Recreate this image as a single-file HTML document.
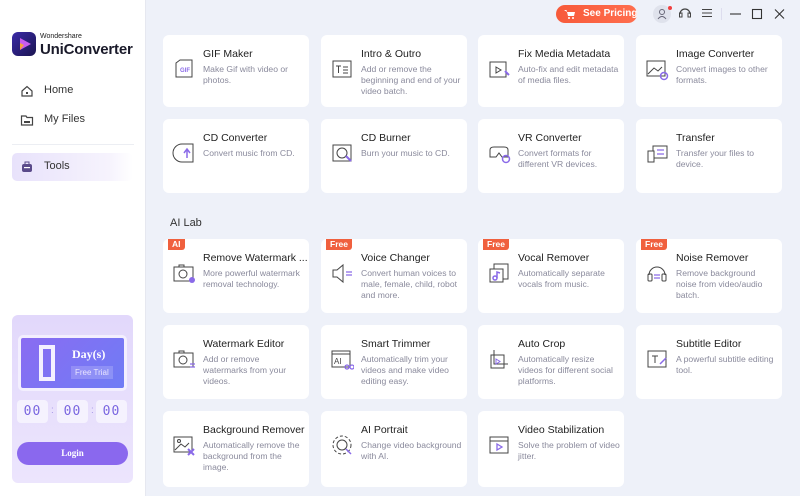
<!DOCTYPE html>
<html><head><meta charset="utf-8"><style>
*{margin:0;padding:0;box-sizing:border-box}
body{width:800px;height:496px;overflow:hidden;font-family:"Liberation Sans",sans-serif;background:#eef1f9;position:relative}
.side{position:absolute;left:0;top:0;width:146px;height:496px;background:#fff;border-right:1px solid #e6e8f0}
.logo{position:absolute;left:12px;top:32px;width:24px;height:24px;border-radius:6px;background:linear-gradient(135deg,#3a2aa8,#1b1550)}
.brand1{position:absolute;left:40px;top:33px;font-size:7px;color:#222}
.brand2{position:absolute;left:40px;top:41px;font-size:15px;font-weight:bold;color:#1a1a2a;letter-spacing:-0.2px}
.nav{position:absolute;left:20px;font-size:11px;color:#333}
.nav span{position:absolute;left:24px;top:0;white-space:nowrap}
.tools{position:absolute;left:12px;top:153px;width:121px;height:28px;border-radius:5px;background:linear-gradient(90deg,#e8e2fb,#f6f3fd 80%,#fff)}
.promo{position:absolute;left:12px;top:315px;width:121px;height:168px;border-radius:6px;background:linear-gradient(180deg,#e2d8fb,#ece5fd)}
.pin{position:absolute;left:6px;top:20px;width:109px;height:56px;border:3px solid #f3effe;border-radius:5px;background:linear-gradient(135deg,#8a6cf2,#6f7cf5)}
.tbox{position:absolute;top:85px;width:31px;height:23px;background:#f5f2fe;border-radius:4px;color:#7a66e0;font-family:"DejaVu Sans Mono",monospace;font-size:13px;text-align:center;line-height:23px;letter-spacing:1px}
.login{position:absolute;left:5px;top:127px;width:111px;height:23px;border-radius:12px;background:#8a68ee;color:#fff;font-family:"Liberation Serif",serif;font-weight:bold;font-size:9px;text-align:center;line-height:23px}
.card{position:absolute;width:146px;background:#fff;border-radius:6px}
.card .ic{position:absolute;left:9px;top:22px;width:24px;height:24px}
.card .t{position:absolute;left:40px;top:13px;font-size:10.5px;color:#222;white-space:nowrap}
.card .d{position:absolute;left:40px;top:29px;width:102px;font-size:8.6px;line-height:11px;color:#8a8a9c}
.bd{position:absolute;left:5px;top:0;height:11px;background:#f0603e;color:#fff;font-size:8.5px;font-weight:bold;line-height:11px;padding:0 4px;border-radius:0 0 3px 0}
.lab{position:absolute;left:170px;top:217px;font-size:11px;color:#333}
</style></head><body>
<div class="side">
 <div class="logo"><svg width="24" height="24"><path d="M8 6 L19 12 L8 18Z" fill="#c85cf0"/><path d="M8 11 L12 13 L8 18Z" fill="#f6a040"/></svg></div>
 <div class="brand1">Wondershare</div>
 <div class="brand2">UniConverter</div>
 <div class="nav" style="top:84px"><svg width="14" height="14"><path d="M2 7 L7 2.5 L12 7 V12 H2Z" fill="none" stroke="#444" stroke-width="1.2"/><rect x="6" y="8" width="2" height="2" fill="#444"/></svg><span>Home</span></div>
 <div class="nav" style="top:113px"><svg width="14" height="14"><path d="M1.5 3 H6 L7 4.5 H12.5 V12 H1.5Z" fill="none" stroke="#444" stroke-width="1.2"/><rect x="4" y="8" width="6" height="2" fill="#444"/></svg><span>My Files</span></div>
 <div style="position:absolute;left:12px;top:144px;width:122px;height:1px;background:#eceef3"></div>
 <div class="tools"></div>
 <div class="nav" style="top:160px"><svg width="14" height="14"><rect x="2" y="4" width="10" height="8" rx="2" fill="#5a4a8a"/><rect x="5" y="2" width="4" height="3" fill="none" stroke="#5a4a8a"/><rect x="4" y="7" width="6" height="1.2" fill="#fff"/></svg><span>Tools</span></div>
 <div class="promo">
  <div class="pin">
   <svg style="position:absolute;left:15px;top:5px" width="22" height="40"><path d="M3 2 H19 V38 H3Z M7 6 V34 H15 V6Z" fill="#f4f0ff" fill-rule="evenodd"/></svg>
   <div style="position:absolute;left:51px;top:9px;color:#fff;font-family:'Liberation Serif',serif;font-weight:bold;font-size:12px">Day(s)</div>
   <div style="position:absolute;left:50px;top:28px;background:rgba(255,255,255,.18);color:#eae6ff;font-size:8px;padding:2px 4px;white-space:nowrap">Free Trial</div>
  </div>
  <div class="tbox" style="left:5px">00</div>
  <div style="position:absolute;left:39px;top:90px;color:#a89ae8;font-size:10px">:</div>
  <div class="tbox" style="left:45px">00</div>
  <div style="position:absolute;left:79px;top:90px;color:#a89ae8;font-size:10px">:</div>
  <div class="tbox" style="left:84px">00</div>
  <div class="login">Login</div>
 </div>
</div>

<div style="position:absolute;left:556px;top:5px;width:81px;height:18px;border-radius:9px;background:linear-gradient(90deg,#f75a3a,#ff6e4e);white-space:nowrap">
 <svg style="position:absolute;left:8px;top:4px" width="12" height="10"><path d="M0 1 H2.5 L4 7 H10 L11 3 H3" fill="#fff"/><circle cx="5" cy="9" r="1" fill="#fff"/><circle cx="9" cy="9" r="1" fill="#fff"/></svg>
 <span style="position:absolute;left:27px;top:0;height:18px;line-height:18px;color:#fff;font-size:10px;font-weight:bold">See Pricing</span></div>
<div style="position:absolute;left:653px;top:5px;width:18px;height:18px;border-radius:9px;background:#dfe2ec"></div>
<svg style="position:absolute;left:656px;top:7px" width="14" height="14"><circle cx="6" cy="5" r="2.5" fill="none" stroke="#667" /><path d="M2 12 Q6 7 10 12" fill="none" stroke="#667"/></svg>
<div style="position:absolute;left:668px;top:6px;width:4px;height:4px;border-radius:2px;background:#f04040"></div>
<svg style="position:absolute;left:678px;top:6px" width="14" height="14"><path d="M2 8 A5 5 0 0 1 12 8" fill="none" stroke="#444" stroke-width="1.2"/><rect x="1.5" y="7" width="2.5" height="4" fill="none" stroke="#444"/><rect x="10" y="7" width="2.5" height="4" fill="none" stroke="#444"/></svg>
<svg style="position:absolute;left:701px;top:8px" width="12" height="10"><path d="M1 1.5H11M1 5H11M1 8.5H11" stroke="#444" stroke-width="1.1"/></svg>
<div style="position:absolute;left:721px;top:8px;width:1px;height:12px;background:#dde"></div>
<svg style="position:absolute;left:729px;top:8px" width="60" height="12"><path d="M1 6H12" stroke="#333" stroke-width="1.1"/><rect x="23.5" y="1.5" width="9" height="9" fill="none" stroke="#333" stroke-width="1.1"/><path d="M46 1.5L55 10.5M55 1.5L46 10.5" stroke="#333" stroke-width="1.1"/></svg>

<div class="card" style="left:163px;top:35px;height:72px"><svg class="ic" viewBox="0 0 24 24"><path d="M4 6 L8 3 H20 V20 H4Z" fill="none" stroke="#444"/><text x="8" y="15" font-size="6" fill="#8a6ae8" font-weight="bold" font-family="Liberation Sans">GIF</text></svg><div class="t">GIF Maker</div><div class="d">Make Gif with video or photos.</div></div>
<div class="card" style="left:321px;top:35px;height:72px"><svg class="ic" viewBox="0 0 24 24"><rect x="3" y="4" width="18" height="16" fill="none" stroke="#444"/><path d="M6 9H11M8.5 9V16M13 10H18M13 13H18M13 16H18" stroke="#444"/></svg><div class="t">Intro &amp; Outro</div><div class="d">Add or remove the beginning and end of your video batch.</div></div>
<div class="card" style="left:478px;top:35px;height:72px"><svg class="ic" viewBox="0 0 24 24"><rect x="3" y="5" width="16" height="15" fill="none" stroke="#444"/><path d="M9 10L14 13L9 16Z" fill="none" stroke="#444"/><path d="M18 14L22 18" stroke="#8a6ae8" stroke-width="2"/></svg><div class="t">Fix Media Metadata</div><div class="d">Auto-fix and edit metadata of media files.</div></div>
<div class="card" style="left:636px;top:35px;height:72px"><svg class="ic" viewBox="0 0 24 24"><rect x="2" y="4" width="18" height="15" fill="none" stroke="#444"/><path d="M3 17L9 11L13 14L17 10" fill="none" stroke="#444"/><circle cx="19" cy="19" r="3.5" fill="none" stroke="#8a6ae8" stroke-width="1.5"/></svg><div class="t">Image Converter</div><div class="d">Convert images to other formats.</div></div>
<div class="card" style="left:163px;top:119px;height:74px"><svg class="ic" viewBox="0 0 24 24"><path d="M10 3 A9 9 0 0 0 10 21 H21 V3Z" fill="none" stroke="#444"/><path d="M15 17V9M12 12L15 8L18 12" fill="none" stroke="#8a6ae8" stroke-width="1.5"/></svg><div class="t">CD Converter</div><div class="d">Convert music from CD.</div></div>
<div class="card" style="left:321px;top:119px;height:74px"><svg class="ic" viewBox="0 0 24 24"><rect x="3" y="4" width="18" height="16" fill="none" stroke="#444"/><circle cx="12" cy="12" r="5" fill="none" stroke="#444"/><path d="M16 15L21 20" stroke="#8a6ae8" stroke-width="2"/></svg><div class="t">CD Burner</div><div class="d">Burn your music to CD.</div></div>
<div class="card" style="left:478px;top:119px;height:74px"><svg class="ic" viewBox="0 0 24 24"><path d="M3 9 Q3 6 7 6 H17 Q21 6 21 9 V16 H15 L12 12 L9 16 H3Z" fill="none" stroke="#444"/><circle cx="19" cy="18" r="3.5" fill="none" stroke="#8a6ae8" stroke-width="1.5"/></svg><div class="t">VR Converter</div><div class="d">Convert formats for different VR devices.</div></div>
<div class="card" style="left:636px;top:119px;height:74px"><svg class="ic" viewBox="0 0 24 24"><rect x="8" y="5" width="14" height="12" fill="none" stroke="#444"/><rect x="3" y="10" width="6" height="11" fill="#fff" stroke="#444"/><path d="M12 9H19M12 13H19" stroke="#8a6ae8" stroke-width="1.3"/></svg><div class="t">Transfer</div><div class="d">Transfer your files to device.</div></div>

<div class="lab">AI Lab</div>
<div class="card" style="left:163px;top:239px;height:74px"><div class="bd">AI</div><svg class="ic" viewBox="0 0 24 24"><rect x="2" y="6" width="19" height="14" fill="none" stroke="#444"/><path d="M7 6V4H12V6" fill="none" stroke="#444"/><circle cx="11" cy="13" r="4" fill="none" stroke="#444"/><circle cx="20" cy="19" r="3" fill="#8a6ae8"/></svg><div class="t">Remove Watermark ...</div><div class="d">More powerful watermark removal technology.</div></div>
<div class="card" style="left:321px;top:239px;height:74px"><div class="bd">Free</div><svg class="ic" viewBox="0 0 24 24"><path d="M3 9H7L13 4V21L7 16H3Z" fill="none" stroke="#444"/><path d="M16 11H22M16 14H22" stroke="#8a6ae8" stroke-width="1.3"/></svg><div class="t">Voice Changer</div><div class="d">Convert human voices to male, female, child, robot and more.</div></div>
<div class="card" style="left:478px;top:239px;height:74px"><div class="bd">Free</div><svg class="ic" viewBox="0 0 24 24"><rect x="7" y="3" width="14" height="15" fill="none" stroke="#444"/><rect x="3" y="8" width="13" height="13" fill="#fff" stroke="#444"/><circle cx="8" cy="17" r="2" fill="none" stroke="#8a6ae8" stroke-width="1.5"/><path d="M10 17V11L13 12" fill="none" stroke="#8a6ae8" stroke-width="1.5"/></svg><div class="t">Vocal Remover</div><div class="d">Automatically separate vocals from music.</div></div>
<div class="card" style="left:636px;top:239px;height:74px"><div class="bd">Free</div><svg class="ic" viewBox="0 0 24 24"><path d="M4 14 A8 8 0 0 1 20 14" fill="none" stroke="#444"/><rect x="3" y="13" width="4" height="7" rx="1" fill="none" stroke="#444"/><rect x="17" y="13" width="4" height="7" rx="1" fill="none" stroke="#444"/><path d="M9 14H15M9 17H15" stroke="#8a6ae8" stroke-width="1.3"/></svg><div class="t">Noise Remover</div><div class="d">Remove background noise from video/audio batch.</div></div>
<div class="card" style="left:163px;top:325px;height:74px"><svg class="ic" viewBox="0 0 24 24"><rect x="2" y="6" width="19" height="14" fill="none" stroke="#444"/><path d="M7 6V4H12V6" fill="none" stroke="#444"/><circle cx="11" cy="13" r="4" fill="none" stroke="#444"/><path d="M18 17H23M18 20H23" stroke="#8a6ae8" stroke-width="1.3"/></svg><div class="t">Watermark Editor</div><div class="d">Add or remove watermarks from your videos.</div></div>
<div class="card" style="left:321px;top:325px;height:74px"><svg class="ic" viewBox="0 0 24 24"><rect x="2" y="4" width="18" height="16" fill="none" stroke="#444"/><path d="M2 7H20" stroke="#444"/><text x="4" y="17" font-size="8" fill="#444" font-family="Liberation Sans">AI</text><circle cx="17" cy="20" r="2" fill="none" stroke="#8a6ae8" stroke-width="1.3"/><circle cx="22" cy="20" r="2" fill="none" stroke="#8a6ae8" stroke-width="1.3"/></svg><div class="t">Smart Trimmer</div><div class="d">Automatically trim your videos and make video editing easy.</div></div>
<div class="card" style="left:478px;top:325px;height:74px"><svg class="ic" viewBox="0 0 24 24"><path d="M7 3V17H21" fill="none" stroke="#444"/><rect x="4" y="8" width="13" height="13" fill="none" stroke="#444"/><path d="M9 12L13 14.5L9 17Z" fill="none" stroke="#8a6ae8"/></svg><div class="t">Auto Crop</div><div class="d">Automatically resize videos for different social platforms.</div></div>
<div class="card" style="left:636px;top:325px;height:74px"><svg class="ic" viewBox="0 0 24 24"><rect x="3" y="4" width="18" height="16" fill="none" stroke="#444"/><path d="M7 9H13M10 9V16" stroke="#444"/><path d="M15 17L21 11" stroke="#8a6ae8" stroke-width="1.5"/></svg><div class="t">Subtitle Editor</div><div class="d">A powerful subtitle editing tool.</div></div>
<div class="card" style="left:163px;top:411px;height:76px"><svg class="ic" viewBox="0 0 24 24"><rect x="2" y="4" width="18" height="15" fill="none" stroke="#444"/><path d="M3 17L9 11L13 14L17 10" fill="none" stroke="#444"/><circle cx="7" cy="8" r="1.5" fill="none" stroke="#444"/><path d="M16 16L22 22M22 16L16 22" stroke="#8a6ae8" stroke-width="2"/></svg><div class="t">Background Remover</div><div class="d">Automatically remove the background from the image.</div></div>
<div class="card" style="left:321px;top:411px;height:76px"><svg class="ic" viewBox="0 0 24 24"><circle cx="12" cy="12" r="9" fill="none" stroke="#444" stroke-dasharray="3 2"/><circle cx="12" cy="12" r="5" fill="none" stroke="#444"/><path d="M16 16L21 21" stroke="#8a6ae8" stroke-width="1.5"/></svg><div class="t">AI Portrait</div><div class="d">Change video background with AI.</div></div>
<div class="card" style="left:478px;top:411px;height:76px"><svg class="ic" viewBox="0 0 24 24"><rect x="3" y="4" width="18" height="16" fill="none" stroke="#444"/><path d="M3 8H21" stroke="#444"/><path d="M10 11L15 14L10 17Z" fill="none" stroke="#8a6ae8" stroke-width="1.3"/></svg><div class="t">Video Stabilization</div><div class="d">Solve the problem of video jitter.</div></div>
</body></html>
